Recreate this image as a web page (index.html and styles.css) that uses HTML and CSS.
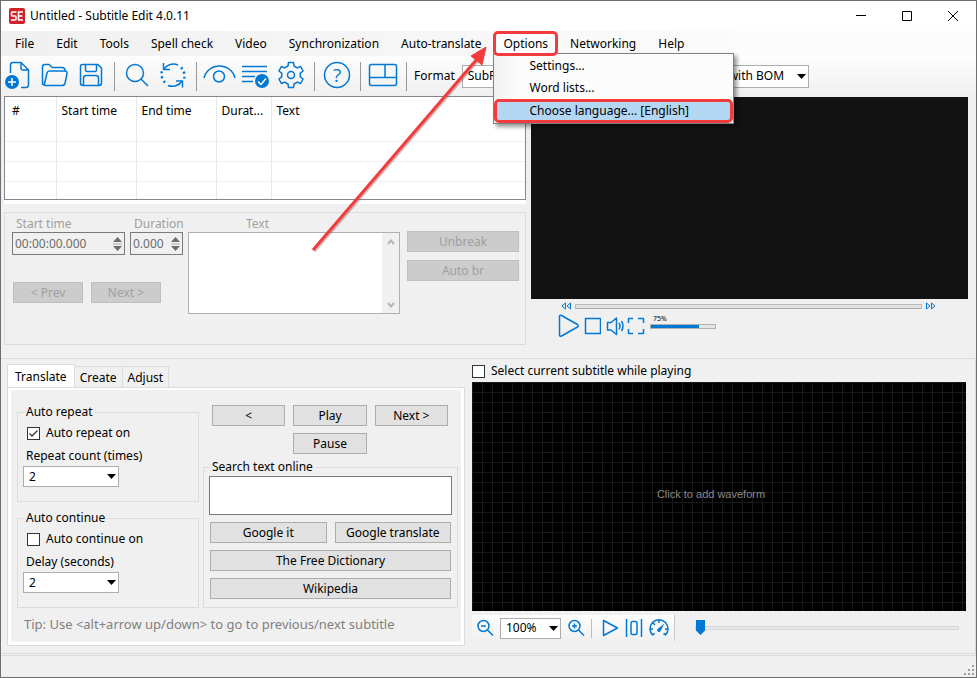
FILE: index.html
```html
<!DOCTYPE html>
<html lang="en">
<head>
  <meta charset="UTF-8">
  <meta name="viewport" content="width=device-width, initial-scale=1.0">
  <title>Untitled - Subtitle Edit 4.0.11</title>
  <link rel="stylesheet" href="styles.css">
</head>
<body>
  <div class="window">
    <header class="titlebar">
      <svg class="logo" viewBox="0 0 16 16">
        <rect width="16" height="16" rx="2" fill="#cf2228"/>
        <path d="M7.500 4H3.500Q2.500 4 2.500 5V7Q2.500 8 3.500 8H6Q7 8 7 9V11Q7 12 6 12H2M14 4H9.500V12H14M9 8H13.500" fill="none" stroke="#fff" stroke-width="1.600"/>
      </svg>
      <h1 class="title">Untitled - Subtitle Edit 4.0.11</h1>
      <div class="window-buttons">
        <button class="window-btn" aria-label="Minimize"><svg viewBox="0 0 12 12"><path d="M1 5.500H11"/></svg></button>
        <button class="window-btn" aria-label="Maximize"><svg viewBox="0 0 12 12"><path d="M1.500 1.500H10.500V10.500H1.500Z"/></svg></button>
        <button class="window-btn" aria-label="Close"><svg viewBox="0 0 12 12"><path d="M1 1L11 11M11 1L1 11"/></svg></button>
      </div>
    </header>

    <nav class="menubar">
      <button class="menu-btn">File</button>
      <button class="menu-btn">Edit</button>
      <button class="menu-btn">Tools</button>
      <button class="menu-btn">Spell check</button>
      <button class="menu-btn">Video</button>
      <button class="menu-btn">Synchronization</button>
      <button class="menu-btn">Auto-translate</button>
      <div class="menu-open">
        <button class="menu-btn marked">Options</button>
        <div class="dropdown">
          <button class="dropdown-item">Settings...</button>
          <button class="dropdown-item">Word lists...</button>
          <button class="dropdown-item selected">Choose language... [English]</button>
        </div>
        <svg class="arrow" viewBox="0 0 184 220">
          <path d="M5 212L168 22" stroke="#8a5050" stroke-width="4" opacity=".4"/>
          <path d="M4 211L168 20" stroke="#f23c3c" stroke-width="3"/>
          <path d="M177 8L173 26L167 21L162 17Z" fill="#f23c3c" stroke="#f23c3c"/>
        </svg>
      </div>
      <button class="menu-btn">Networking</button>
      <button class="menu-btn">Help</button>
    </nav>

    <div class="toolbar">
      <button class="tool" aria-label="New">
        <svg viewBox="0 0 36 40">
          <path d="M9.500 17V9Q9.500 6.500 12 6.500H20L27.500 14V28.500Q27.500 31.500 25 31.500H20M20 6.500V12Q20 14 22 14H27.500"/>
          <circle cx="11" cy="26" r="7" fill="#0078d4" stroke="none"/>
          <path d="M11 22V30M7 26H15" stroke="#fff"/>
        </svg>
      </button>
      <button class="tool" aria-label="Open">
        <svg viewBox="0 0 36 40">
          <path d="M7 29Q5.500 29 5.500 27V11Q5.500 8.500 8 8.500H12L15.500 11.500H25Q28 11.500 28 14.500M7.500 29.500H25Q27.500 29.500 28 27.500L30 17.500Q30.500 15 28 15H12.500Q10.500 15 10 17L7.500 27.500Q7 29.500 9 29.500"/>
        </svg>
      </button>
      <button class="tool" aria-label="Save">
        <svg viewBox="0 0 36 40">
          <path d="M9.500 8.500H25L28.500 12V27Q28.500 29.500 26 29.500H10Q7.500 29.500 7.500 27V10.500Q7.500 8.500 9.500 8.500ZM12.500 8.500V14Q12.500 15.500 14 15.500H22Q23.500 15.500 23.500 14V8.500M10.500 29.500V22Q10.500 19.500 13 19.500H23Q25.500 19.500 25.500 22V29.500"/>
        </svg>
      </button>
      <span class="sep"></span>
      <button class="tool" aria-label="Find">
        <svg viewBox="0 0 36 40"><circle cx="16" cy="17" r="8.500"/><path d="M22 23L29 30"/></svg>
      </button>
      <button class="tool" aria-label="Replace">
        <svg viewBox="0 0 36 40">
          <path d="M9 13A11.500 11.500 0 0 1 23 9M27 25A11.500 11.500 0 0 1 13 29.500"/>
          <path d="M26 11.500A11.500 11.500 0 0 1 29 23M10 26.500A11.500 11.500 0 0 1 7 15" stroke-width="2.500" stroke-dasharray="2 3"/>
          <path d="M8.500 7V13.500H15M27.500 31.500V25H21"/>
        </svg>
      </button>
      <span class="sep"></span>
      <button class="tool" aria-label="Visual sync">
        <svg viewBox="0 0 36 40"><path d="M3 22C7 6 30 6 34 22"/><circle cx="18" cy="20.500" r="5.500"/></svg>
      </button>
      <button class="tool" aria-label="Spell check">
        <svg viewBox="0 0 36 40">
          <path d="M5 10.500H30M5 15.500H30M5 20.500H18M5 25.500H16"/>
          <circle cx="25" cy="25" r="7" fill="#0078d4" stroke="none"/>
          <path d="M21 25.500L24 28.500L29 22.500" stroke="#fff"/>
        </svg>
      </button>
      <button class="tool" aria-label="Settings">
        <svg viewBox="-18 -19 36 40">
          <path d="M-3 -9L-2.500 -12.500H2.500L3 -9L6.300 -7.100L9.600 -8.500L12.100 -4L9.300 -1.900V1.900L12.100 4L9.600 8.500L6.300 7.100L3 9L2.500 12.500H-2.500L-3 9L-6.300 7.100L-9.600 8.500L-12.100 4L-9.300 1.900V-1.900L-12.100 -4L-9.600 -8.500L-6.300 -7.100Z"/>
          <circle r="3.500"/>
        </svg>
      </button>
      <span class="sep"></span>
      <button class="tool" aria-label="Help">
        <svg viewBox="0 0 36 40"><circle cx="18" cy="19" r="12.500"/><text class="help-mark" x="18" y="26">?</text></svg>
      </button>
      <span class="sep"></span>
      <button class="tool" aria-label="Layout">
        <svg viewBox="0 0 36 40"><rect x="4.500" y="8.500" width="27" height="21" rx="2"/><path d="M4.500 21.500H31.500M20 8.500V21.500"/></svg>
      </button>
      <span class="sep"></span>
      <label class="tool-label" for="format">Format</label>
      <select class="select format" id="format"><option>SubRip (.srt)</option></select>
      <label class="tool-label" for="encoding">Encoding</label>
      <select class="select encoding" id="encoding"><option>UTF-8 with BOM</option></select>
    </div>

    <main class="top">
      <section class="editor">
        <div class="list">
          <table class="subtitles">
            <thead>
              <tr><th class="col-num">#</th><th class="col-time">Start time</th><th class="col-time">End time</th><th class="col-dur">Durat...</th><th>Text</th></tr>
            </thead>
            <tbody>
              <tr><td></td><td></td><td></td><td></td><td></td></tr>
              <tr><td></td><td></td><td></td><td></td><td></td></tr>
              <tr><td></td><td></td><td></td><td></td><td></td></tr>
              <tr><td></td><td></td><td></td><td></td><td></td></tr>
            </tbody>
          </table>
        </div>
        <div class="edit-box">
          <div class="timing">
            <div class="field">
              <label for="start">Start time</label>
              <div class="spinner start">
                <input id="start" type="text" value="00:00:00.000" disabled>
                <svg viewBox="0 0 9 14"><path d="M0 5L4.500 0L9 5ZM0 9L4.500 14L9 9Z" fill="#6d6d6d"/><path d="M0 7H9" stroke="#aaa"/></svg>
              </div>
            </div>
            <div class="field">
              <label for="duration">Duration</label>
              <div class="spinner duration">
                <input id="duration" type="text" value="0.000" disabled>
                <svg viewBox="0 0 9 14"><path d="M0 5L4.500 0L9 5ZM0 9L4.500 14L9 9Z" fill="#6d6d6d"/><path d="M0 7H9" stroke="#aaa"/></svg>
              </div>
            </div>
            <button class="btn step" disabled>&lt; Prev</button>
            <button class="btn step" disabled>Next &gt;</button>
          </div>
          <div class="field text-field">
            <label class="text-label" for="text">Text</label>
            <div class="text-wrap">
              <textarea id="text" disabled></textarea>
              <div class="scroll">
                <svg viewBox="0 0 8 6"><path d="M1 5L4 1.500L7 5"/></svg>
                <svg viewBox="0 0 8 6"><path d="M1 1L4 4.500L7 1"/></svg>
              </div>
            </div>
          </div>
          <div class="break-buttons">
            <button class="btn" disabled>Unbreak</button>
            <button class="btn" disabled>Auto br</button>
          </div>
        </div>
      </section>

      <section class="player">
        <div class="video"></div>
        <div class="seek">
          <svg viewBox="0 0 11 8"><path d="M4.500 1L1 4L4.500 7ZM9.500 1L6 4L9.500 7Z"/></svg>
          <div class="seek-bar"></div>
          <svg viewBox="0 0 11 8"><path d="M1.500 1L5 4L1.500 7ZM6.500 1L10 4L6.500 7Z"/></svg>
        </div>
        <div class="controls">
          <button class="ctl" aria-label="Play"><svg width="24" height="24" viewBox="0 0 24 24"><path d="M2.500 3Q2.500 0.500 4.500 1.500L20.500 10.500Q22 12 20.500 13L4.500 22Q2.500 23 2.500 20.500Z"/></svg></button>
          <button class="ctl" aria-label="Stop"><svg width="20" height="24" viewBox="0 0 20 24"><rect x="4.500" y="4.500" width="15" height="15"/></svg></button>
          <button class="ctl" aria-label="Mute"><svg width="24" height="24" viewBox="0 0 24 24"><path d="M6.500 8.500H10L15.500 4V20.500L10 16H6.500ZM18 9Q20 12 18 15.500M20.500 7Q23.500 12 20.500 17"/></svg></button>
          <button class="ctl" aria-label="Fullscreen"><svg width="20" height="24" viewBox="0 0 20 24"><path d="M3.500 9V4.500H8M13 4.500H18.500V9M18.500 15V19.500H13M8 19.500H3.500V15"/></svg></button>
          <div class="volume">
            <span class="volume-text">75%</span>
            <div class="volume-bar"><div class="volume-fill" style="width: 75%"></div></div>
          </div>
        </div>
      </section>
    </main>

    <div class="bottom">
      <section class="tabs">
        <div class="tab-list">
          <button class="tab active">Translate</button>
          <button class="tab">Create</button>
          <button class="tab">Adjust</button>
        </div>
        <div class="tab-panel">
          <div class="auto-col">
            <fieldset class="group">
              <legend>Auto repeat</legend>
              <label class="check"><input type="checkbox" checked>Auto repeat on</label>
              <label class="select-label" for="repeat">Repeat count (times)</label>
              <select class="select count" id="repeat"><option>2</option></select>
            </fieldset>
            <fieldset class="group">
              <legend>Auto continue</legend>
              <label class="check"><input type="checkbox">Auto continue on</label>
              <label class="select-label" for="delay">Delay (seconds)</label>
              <select class="select count" id="delay"><option>2</option></select>
            </fieldset>
          </div>
          <div class="search-col">
            <div class="play-buttons">
              <button class="btn">&lt;</button>
              <button class="btn">Play</button>
              <button class="btn">Next &gt;</button>
              <button class="btn pause">Pause</button>
            </div>
            <fieldset class="group search">
              <legend>Search text online</legend>
              <textarea class="search-text" aria-label="Search text online"></textarea>
              <div class="search-buttons">
                <button class="btn">Google it</button>
                <button class="btn">Google translate</button>
                <button class="btn wide">The Free Dictionary</button>
                <button class="btn wide">Wikipedia</button>
              </div>
            </fieldset>
          </div>
          <p class="tip">Tip: Use &lt;alt+arrow up/down&gt; to go to previous/next subtitle</p>
        </div>
      </section>

      <section class="wave-col">
        <label class="check select-current"><input type="checkbox">Select current subtitle while playing</label>
        <div class="waveform">Click to add waveform</div>
        <div class="wave-row">
          <div class="wave-tools">
            <button class="wave-btn" aria-label="Zoom out"><svg viewBox="0 0 18 18"><circle cx="7.500" cy="7" r="5.500"/><path d="M11.500 11L17 16.500M5 7H10"/></svg></button>
            <select class="select zoom" aria-label="Zoom"><option>100%</option></select>
            <button class="wave-btn" aria-label="Zoom in"><svg viewBox="0 0 18 18"><circle cx="7.500" cy="7" r="5.500"/><path d="M11.500 11L17 16.500M5 7H10M7.500 4.500V9.500"/></svg></button>
            <span class="wave-sep"></span>
            <button class="wave-btn" aria-label="Play"><svg viewBox="0 0 18 18"><path d="M2.500 1.500L16.500 9L2.500 16.500Z"/></svg></button>
            <button class="wave-btn" aria-label="Center"><svg viewBox="0 0 18 18"><path d="M1.500 0V18M16.500 0V18"/><rect x="6" y="2.500" width="6" height="13" rx="1.500"/></svg></button>
            <button class="wave-btn speed" aria-label="Speed"><svg viewBox="0 0 20 18"><path d="M4 16.500A9 9 0 1 1 16 16.500M10 1V4M1 10H4M16 10H19M4 4L6 6M3 16L5.500 14.500M17 16L14.500 14.500"/><path d="M15.500 4.500L8 10.500Q8 13.500 11 13Z" fill="#0078d4" stroke="none"/></svg></button>
          </div>
          <input class="position" type="range" value="0" aria-label="Position">
        </div>
      </section>
    </div>

    <footer class="statusbar">
      <svg class="grip" viewBox="0 0 12 12"><path d="M8 0h2v2h-2zM4 4h2v2h-2zM8 4h2v2h-2zM0 8h2v2h-2zM4 8h2v2h-2zM8 8h2v2h-2z" fill="#a0a0a0"/></svg>
    </footer>
  </div>
</body>
</html>
```
FILE: styles.css
```css
:root {
  --face: #f0f0f0;
  --line: #dcdcdc;
  --accent: #0078d4;
  --mark: #f23c3c;
}

* {
  box-sizing: border-box;
}

body {
  margin: 0;
  font-family: "Noto Sans", sans-serif;
  font-size: 12px;
  line-height: 18px;
  color: #000;
}

button,
input,
select,
textarea {
  font: inherit;
  color: inherit;
  margin: 0;
}

button {
  background: none;
  border: none;
  padding: 0;
}

svg {
  display: block;
}

.window {
  display: flex;
  flex-direction: column;
  min-height: 100vh;
  background: var(--face);
  border: 1px solid #6e6e6e;
}

/* Title bar */
.titlebar {
  display: flex;
  align-items: center;
  height: 30px;
  padding-left: 8px;
  background: #fff;
}

.logo {
  width: 16px;
  height: 16px;
}

.title {
  flex: 1;
  margin: 0 0 0 5px;
  font-size: 12px;
  font-weight: normal;
}

.window-buttons {
  display: flex;
}

.window-btn {
  display: flex;
  align-items: center;
  justify-content: center;
  width: 46px;
  height: 28px;
}

.window-btn svg {
  width: 12px;
  height: 12px;
  fill: none;
  stroke: #000;
}

/* Menu bar */
.menubar {
  display: flex;
  gap: 2px;
  height: 25px;
  padding-left: 4px;
  background: linear-gradient(90deg, #f0f0f0, #fcfcfc 80%);
}

.menu-btn {
  height: 25px;
  padding: 0 10px;
  white-space: nowrap;
}

.menu-open {
  position: relative;
}

.menu-btn.marked {
  position: relative;
  z-index: 3;
  padding: 0 7px;
  background: #fdfdfd;
  border: 3px solid var(--mark);
  border-radius: 5px;
}

.dropdown {
  position: absolute;
  top: 22px;
  left: 0;
  z-index: 2;
  width: 241px;
  padding-top: 1px;
  background: linear-gradient(90deg, #f1f1f1, #fcfcfc 25px);
  border: 1px solid #808080;
  box-shadow: 3px 3px 4px rgba(0, 0, 0, 0.4);
}

.dropdown-item {
  display: block;
  width: 100%;
  height: 22px;
  padding-left: 35px;
  text-align: left;
}

.dropdown-item.selected {
  height: 24px;
  padding-left: 32px;
  background: #b3d7f3;
  border: 3px solid var(--mark);
  border-radius: 5px;
}

.arrow {
  position: absolute;
  top: 8px;
  right: 100%;
  z-index: 4;
  width: 184px;
  height: 220px;
  fill: none;
  pointer-events: none;
}

/* Toolbar */
.toolbar {
  display: flex;
  align-items: center;
  height: 40px;
  background: linear-gradient(#fdfdfd, #f0f0f0);
}

.tool {
  flex: none;
}

.tool svg {
  width: 36px;
  height: 40px;
  fill: none;
  stroke: var(--accent);
  stroke-width: 1.5;
  stroke-linejoin: round;
}

.help-mark {
  font-family: "Open Sans", sans-serif;
  font-size: 19px;
  text-anchor: middle;
  fill: var(--accent);
  stroke: none;
}

.sep {
  flex: none;
  width: 1px;
  height: 29px;
  margin: 0 4px 0 5px;
  background: #999;
}

.tool-label {
  padding: 0 7px 0 3px;
}

.select {
  appearance: none;
  height: 21px;
  padding: 0 18px 0 5px;
  background: #fff url("data:image/svg+xml,%3Csvg xmlns='http://www.w3.org/2000/svg' width='9' height='5'%3E%3Cpath d='M0 0H9L4.500 5Z'/%3E%3C/svg%3E") no-repeat right 2px center;
  border: 1px solid #adadad;
  border-radius: 0;
}

.format {
  width: 163px;
  height: 23px;
}

.encoding {
  width: 122px;
  height: 23px;
}

/* Subtitle list and edit box */
.top {
  display: grid;
  grid-template-columns: 522fr 437fr;
  gap: 5px;
  padding: 0 8px 13px 3px;
}

.list {
  min-height: 104px;
  background: #fff;
  border: 1px solid #828790;
  box-shadow: 0 4px #fff;
}

.subtitles {
  width: 100%;
  table-layout: fixed;
  border-collapse: collapse;
}

.subtitles th {
  height: 24px;
  padding: 4px 5px 0;
  font-weight: normal;
  text-align: left;
  white-space: nowrap;
}

.subtitles .col-num {
  width: 51px;
  padding-left: 7px;
}

.col-time {
  width: 80px;
}

.col-dur {
  width: 55px;
}

.subtitles th,
.subtitles td {
  border-right: 1px solid #e8e8e8;
}

.subtitles th:last-child,
.subtitles td:last-child {
  border-right: none;
}

.subtitles td {
  height: 20px;
  padding: 0;
  border-bottom: 1px solid #f0f0f0;
}

.subtitles tr:last-child td {
  height: 18px;
  border-bottom: none;
}

.edit-box {
  display: flex;
  gap: 5px;
  min-height: 133px;
  margin-top: 12px;
  padding: 1px 6px 5px 7px;
  color: #a0a0a0;
  border: 1px solid var(--line);
}

.timing {
  display: grid;
  grid-template-columns: 113px 53px;
  align-content: start;
  column-gap: 5px;
  row-gap: 27px;
}

.field label {
  display: block;
  height: 18px;
  padding-left: 4px;
  line-height: 20px;
}

.spinner {
  display: flex;
  align-items: center;
  height: 23px;
  padding-right: 2px;
  color: #6d6d6d;
  border: 1px solid #7a7a7a;
}

.spinner input {
  flex: 1;
  min-width: 0;
  height: 21px;
  padding: 0 2px;
  background: none;
  border: none;
}

.spinner svg {
  flex: none;
  width: 9px;
  height: 14px;
}

.btn {
  height: 21px;
  line-height: 18px;
  background: #e1e1e1;
  border: 1px solid #adadad;
}

.btn:disabled {
  color: #a0a0a0;
  background: #ccc;
  border-color: #bfbfbf;
}

.step {
  width: 70px;
  margin-left: 1px;
}

.step:last-child {
  margin-left: -39px;
}

.text-field {
  flex: 1;
}

.field .text-label {
  padding-left: 58px;
}

.text-wrap {
  display: flex;
  height: 82px;
  background: #fff;
  border: 1px solid #b0b0b0;
}

.text-wrap textarea {
  flex: 1;
  min-width: 0;
  background: #fff;
  border: none;
  resize: none;
}

.scroll {
  display: flex;
  flex-direction: column;
  justify-content: space-between;
  align-items: center;
  width: 17px;
  padding: 6px 0 5px;
  background: var(--face);
}

.scroll svg {
  width: 8px;
  height: 6px;
  fill: none;
  stroke: #b5b5b5;
  stroke-width: 2;
}

.break-buttons {
  display: flex;
  flex-direction: column;
  gap: 8px;
  width: 114px;
  padding: 17px 0 0 2px;
}

/* Video player */
.player {
  display: flex;
  flex-direction: column;
}

.video {
  height: 202px;
  margin-top: 1px;
  background: #121212;
}

.seek {
  display: flex;
  align-items: center;
  gap: 3px;
  padding: 3px 32px 0 30px;
}

.seek svg {
  width: 11px;
  height: 8px;
  fill: none;
  stroke: var(--accent);
}

.seek-bar {
  flex: 1;
  height: 5px;
  background: #e2e2e2;
  border: 1px solid #bcbcbc;
  border-bottom-color: #a9a9a9;
}

.controls {
  display: flex;
  padding: 4px 0 0 26px;
}

.ctl svg {
  fill: none;
  stroke: var(--accent);
  stroke-width: 1.5;
  stroke-linejoin: round;
}

.volume {
  width: 66px;
  margin-left: 5px;
}

.volume-text {
  display: block;
  padding-left: 3px;
  font-size: 7px;
  line-height: 10px;
}

.volume-bar {
  height: 5px;
  background: #e6e6e6;
  border: 1px solid #b0b0b0;
}

.volume-fill {
  height: 3px;
  background: var(--accent);
}

/* Bottom panels */
.bottom {
  display: grid;
  grid-template-columns: 458fr 494fr;
  gap: 7px;
  flex: 1;
  padding: 5px 9px 7px 6px;
  border: solid var(--line);
  border-width: 1px 1px 1px 0;
}

.tabs {
  display: flex;
  flex-direction: column;
}

.tab-list {
  display: flex;
  align-items: flex-end;
  height: 24px;
}

.tab {
  height: 22px;
  padding: 0 5px;
  border: 1px solid var(--line);
  border-width: 1px 1px 0 0;
}

.tab.active {
  height: 25px;
  padding: 0 7px;
  margin-bottom: -1px;
  background: #fff;
  border-left-width: 1px;
}

.tab-panel {
  display: grid;
  grid-template-columns: 182px minmax(0, 256px);
  grid-template-rows: auto 1fr;
  column-gap: 4px;
  flex: 1;
  margin: 0 1px 1px;
  padding: 13px 3px 0 6px;
  border: 3px solid #fff;
  border-top-width: 2px;
  outline: 1px solid var(--line);
}

.group {
  min-width: 0;
  margin: 0;
  padding: 0 5px;
  border: 1px solid var(--line);
}

.group legend {
  height: 18px;
  margin-left: 1px;
  padding: 0 2px;
}

.auto-col {
  display: flex;
  flex-direction: column;
  gap: 7px;
}

.auto-col .group {
  height: 99px;
}

.check {
  display: flex;
  align-items: center;
  gap: 6px;
}

.auto-col .check {
  margin: 3px 0 4px 4px;
}

.check input {
  appearance: none;
  width: 13px;
  height: 13px;
  background: #fff;
  border: 1px solid #333;
}

.check input:checked {
  background: #fff url("data:image/svg+xml,%3Csvg xmlns='http://www.w3.org/2000/svg' width='11' height='11'%3E%3Cpath d='M1.500 5.500L4 8L9.500 2.500' fill='none' stroke='%23333' stroke-width='1.300'/%3E%3C/svg%3E") no-repeat;
}

.select-label {
  display: block;
  padding: 1px 0 1px 3px;
}

.count {
  display: block;
  width: 96px;
}

.search-col {
  display: flex;
  flex-direction: column;
}

.play-buttons {
  display: grid;
  grid-template-columns: repeat(3, 1fr);
  gap: 7px 8px;
  padding: 2px 10px 4px 9px;
}

.pause {
  grid-column: 2;
}

.search {
  flex: 1;
}

.search .search-text {
  display: block;
  width: 100%;
  height: 39px;
  border: 1px solid #7a7a7a;
  resize: none;
}

.search-buttons {
  display: grid;
  grid-template-columns: 1fr 1fr;
  gap: 7px 8px;
  padding: 7px 1px 0;
}

.wide {
  grid-column: 1 / 3;
}

.tip {
  grid-column: 1 / 3;
  margin: 7px 0 0 7px;
  font-size: 13px;
  color: #808080;
}

/* Waveform */
.wave-col {
  display: flex;
  flex-direction: column;
}

.select-current {
  height: 14px;
  margin-bottom: 4px;
}

.waveform {
  display: flex;
  align-items: center;
  justify-content: center;
  min-height: 229px;
  padding: 0 16px 6px 0;
  font-family: "Liberation Sans", sans-serif;
  font-size: 11px;
  color: #8a8a8a;
  background-color: #000;
  background-image: linear-gradient(90deg, #191919 1px, transparent 1px), linear-gradient(#191919 1px, transparent 1px);
  background-size: 10px 10px;
}

.wave-row {
  display: flex;
  align-items: center;
  gap: 20px;
  padding: 4px 7px 0 0;
}

.wave-tools {
  display: flex;
  align-items: center;
  gap: 6px;
  height: 26px;
  padding: 0 5px 0 4px;
  background: linear-gradient(#fdfdfd, #f0f0f0);
  border-right: 1px solid #c8c8c8;
}

.wave-btn svg {
  width: 18px;
  height: 18px;
  fill: none;
  stroke: var(--accent);
  stroke-width: 1.5;
  stroke-linejoin: round;
}

.wave-btn.speed svg {
  width: 20px;
}

.zoom {
  width: 61px;
}

.wave-sep {
  flex: none;
  width: 1px;
  height: 19px;
  margin-right: 3px;
  background: #bdbdbd;
}

.position {
  appearance: none;
  flex: 1;
  min-width: 0;
  height: 16px;
  background: none;
}

.position::-webkit-slider-runnable-track {
  height: 4px;
  background: #e7eaea;
  border: 1px solid #d6d6d6;
}

.position::-webkit-slider-thumb {
  appearance: none;
  width: 9px;
  height: 15px;
  margin-top: -7px;
  background: var(--accent);
  clip-path: polygon(0 0, 100% 0, 100% 70%, 50% 100%, 0 70%);
}

/* Status bar */
.statusbar {
  display: flex;
  align-items: flex-end;
  justify-content: flex-end;
  height: 22px;
  margin-top: 1px;
  border-top: 1px solid var(--line);
}

.grip {
  width: 12px;
  height: 12px;
}
```
